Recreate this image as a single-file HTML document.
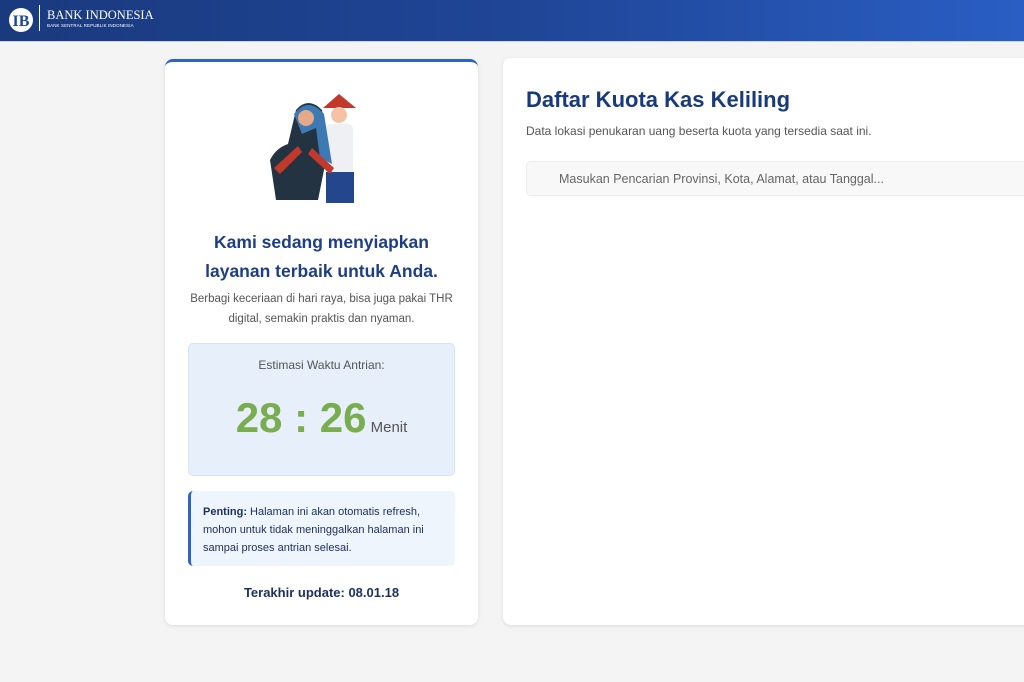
<!DOCTYPE html>
<html><head><meta charset="utf-8"><style>
*{margin:0;padding:0;box-sizing:border-box}
body{width:1024px;height:682px;background:#f4f4f4;font-family:"Liberation Sans",sans-serif;position:relative;overflow:hidden}
.hdr{position:absolute;left:0;top:0;width:1024px;height:42px;background:linear-gradient(90deg,#1a3a7e,#1f4596 50%,#2a5ec4);border-bottom:1px solid #c9d3e4}
.card{position:absolute;background:#fff;border-radius:8px;box-shadow:0 1px 4px rgba(0,0,0,.1)}
.c{text-align:center}
</style></head><body>
<div class="hdr">
<svg width="30" height="30" style="position:absolute;left:6px;top:5px" viewBox="0 0 30 30"><circle cx="15" cy="15" r="12" fill="#fff"/><text x="15" y="21" font-family="Liberation Serif" font-weight="bold" font-size="16" fill="#1f4596" text-anchor="middle">IB</text></svg>
<div style="position:absolute;left:39px;top:5px;width:1px;height:26px;background:#fff"></div>
<div style="position:absolute;left:47px;top:8px;color:#fff;font-family:'Liberation Serif',serif;font-size:12.5px">BANK INDONESIA</div>
<div style="position:absolute;left:47px;top:23px;color:#fff;font-size:4.5px;letter-spacing:.1px">BANK SENTRAL REPUBLIK INDONESIA</div>
</div>

<div class="card" style="left:165px;top:59px;width:313px;height:566px;border-top:3px solid #2f63bd">
<svg width="120" height="115" style="position:absolute;left:95px;top:26px" viewBox="0 0 120 115">
<polygon points="63,20 79,6 96,20" fill="#c0392b"/>
<circle cx="79" cy="27" r="8" fill="#f2c4a5"/>
<rect x="65" y="36" width="28" height="50" rx="5" fill="#eef0f4"/>
<rect x="66" y="84" width="28" height="31" fill="#24468c"/>
<path d="M36 22 q12 -14 26 0 l6 40 l-10 50 h-42 l-6 -40 q6 -12 18 -16z" fill="#233342"/>
<path d="M34 26 q14 -18 30 0 l8 50 l-12 -6 l-4 -30 l-14 6z" fill="#3d7ab3"/>
<circle cx="46" cy="30" r="8" fill="#e3a988"/>
<path d="M14 80 l24 -22 l4 6 l-22 22z M74 80 l-22 -20 l-4 6 l22 20z" fill="#c0392b"/>
</svg>
<div class="c" style="position:absolute;top:166px;width:100%;color:#1d3e85;font-weight:bold;font-size:17.5px;line-height:29px">Kami sedang menyiapkan<br>layanan terbaik untuk Anda.</div>
<div class="c" style="position:absolute;top:227px;width:100%;color:#555;font-size:11.5px;line-height:20px">Berbagi keceriaan di hari raya, bisa juga pakai THR<br>digital, semakin praktis dan nyaman.</div>
<div style="position:absolute;left:23px;top:281px;width:267px;height:133px;background:#e7effb;border:1px solid #d6e2f5;border-radius:5px">
<div class="c" style="margin-top:14px;color:#555;font-size:12px">Estimasi Waktu Antrian:</div>
<div class="c" style="margin-top:22px;color:#7aad4f;font-weight:bold;font-size:42px">28 : 26<span style="font-weight:normal;font-size:15px;color:#555"> Menit</span></div>
</div>
<div style="position:absolute;left:23px;top:429px;width:267px;height:75px;background:#eff5fd;border-left:3px solid #2f63bd;border-radius:5px;padding:12px 12px;color:#1d3160;font-size:11px;line-height:18px"><b>Penting:</b> Halaman ini akan otomatis refresh, mohon untuk tidak meninggalkan halaman ini sampai proses antrian selesai.</div>
<div class="c" style="position:absolute;top:523px;width:100%;color:#1d3160;font-weight:bold;font-size:13px">Terakhir update: 08.01.18</div>
</div>

<div class="card" style="left:503px;top:58px;width:540px;height:567px">
<div style="position:absolute;left:23px;top:29px;color:#173a7c;font-weight:bold;font-size:22px">Daftar Kuota Kas Keliling</div>
<div style="position:absolute;left:23px;top:66px;color:#555;font-size:12px">Data lokasi penukaran uang beserta kuota yang tersedia saat ini.</div>
<div style="position:absolute;left:23px;top:103px;width:530px;height:35px;background:#f8f8f8;border:1px solid #ececec;border-radius:5px;padding:10px 0 0 32px;color:#666;font-size:12.5px">Masukan Pencarian Provinsi, Kota, Alamat, atau Tanggal...</div>
</div>
</body></html>
